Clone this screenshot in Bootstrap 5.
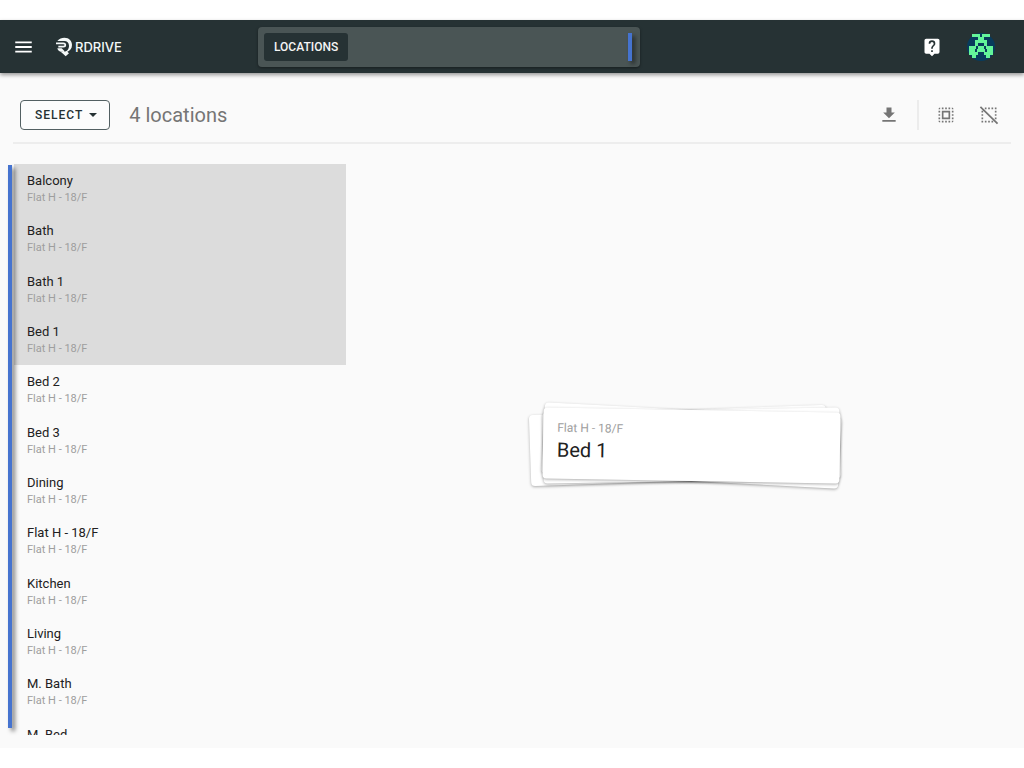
<!DOCTYPE html>
<html lang="en">
<head>
<meta charset="utf-8">
<meta name="viewport" content="width=device-width, initial-scale=1">
<title>RDrive – Locations</title>
<link href="https://cdn.jsdelivr.net/npm/bootstrap@5.3.0/dist/css/bootstrap.min.css" rel="stylesheet">
<style>
  body { font-family: Roboto, "Liberation Sans", sans-serif; color: #212121; background: #fff; padding: 20px 0; height: 100vh; overflow: hidden; }
  .app { background: #fafafa; }
  .topbar { background: #263234; height: 53px; padding: 0 28px 0 12px; box-shadow: 0 2px 4px rgba(0,0,0,.4); z-index: 2; }
  .topbar-start { flex: 0 0 25%; }
  .topbar-end { flex: 1 1 0; }
  .icon-btn { padding: 0; border: 0; line-height: 0; color: inherit; }
  .brand { font: 500 13px/20px Inter, Roboto, sans-serif; color: #f4f8f8; margin-left: 21px; gap: 1px; }
  .omnibox { flex: 0 1 382px; height: 40px; padding: 6px 8px 6px 6px; background: #4a5555; border-radius: 4px; box-shadow: 0 1px 3px rgba(0,0,0,.4); }
  .chip { background: #263234; color: #f5f5f5; font-size: 12px; font-weight: 500; line-height: 28px; padding: 0 10px; border: 0; border-radius: 3px; }
  .omnibox input { background: transparent; border: 0; outline: 0; color: #fff; min-width: 0; }
  .mark-bar { background: #4573cf; width: 4px; box-shadow: 3px 3px 4px rgba(0,0,0,.5); }
  .tools { margin: 0 13px; padding: 14px 12px 0 7px; height: 71px; border-bottom: 2px solid #ededed; color: #757575; }
  .select-btn { height: 30px; padding: 0 12px 0 14px; font-size: 12px; font-weight: 500; letter-spacing: 1px; line-height: 28px; color: #263234; border: 1px solid #536062; border-radius: 4px; background: #fcfcfc; }
  .select-btn::after { margin-left: 6px; vertical-align: 2px; border-width: 4px 4px 0; }
  .count { font-size: 20px; line-height: 28px; margin-left: 19px; color: #757575; }
  .rule { width: 2px; height: 30px; background: #ececec; margin: 0 17px 0 18px; }
  .pair { gap: 23px; }
  .browse { padding: 20px 0 13px 8px; min-height: 0; }
  .browse > .mark-bar { margin: 1px 0 7px; z-index: 1; }
  .places { width: 332px; overflow: hidden; margin-left: 2px; }
  .places ul { display: grid; grid-auto-rows: 1fr; height: 604px; }
  .places li { padding: 8px 13px 0; }
  .places li.active { background: #dcdcdc; }
  .place { font-size: 13px; line-height: 18px; }
  .where { font-size: 12px; line-height: 16px; color: #9e9e9e; }
  .places .where { font-size: 11px; }
  .viewer { padding: 0 0 9px 12px; }
  .stack { position: relative; width: 297px; height: 71px; }
  .sheet { position: absolute; inset: 0; background: #fff; border-radius: 4px; box-shadow: 0 1px 3px rgba(0,0,0,.32); }
  .sheet-a { transform: translateX(-13px) rotate(-2deg); }
  .sheet-b { transform: rotate(3deg); }
  .sheet-c { transform: rotate(-1deg); }
  .sheet-top { transform: rotate(1deg); padding: 12px 14px; }
  .sheet-top h2 { font-size: 20px; line-height: 28px; font-weight: 400; }
</style>
</head>
<body>
<div class="app d-flex flex-column h-100">
  <header class="topbar d-flex align-items-center flex-shrink-0 position-relative">
    <div class="topbar-start d-flex align-items-center text-white">
      <button class="icon-btn btn" type="button" aria-label="Menu">
        <svg width="23" height="22" viewBox="0 0 24 24" fill="currentColor"><path d="M3 18h18v-2H3zm0-5h18v-2H3zm0-7v2h18V6z"/></svg>
      </button>
      <a class="brand d-flex align-items-center text-decoration-none" href="#">
        <svg width="18" height="20" viewBox="0 0 54 60"><path fill="#f4f8f8" d="M4 12C10 5 17 2 25 2c15 0 23 10 23 22 0 11-6 17-14 20l5 5-10 9-8-8-7-6h8c12 0 17-8 17-18 0-9-6-14-14-14z"/><path fill="none" stroke="#f4f8f8" stroke-width="5" d="M0 19h22c8 0 8 10 0 10H7"/><path fill="#f4f8f8" d="M4 34h13l9 9-3 4-3-3H14c-5 0-9-5-10-10z"/></svg>
        RDRIVE
      </a>
    </div>
    <div class="omnibox d-flex">
      <button class="chip" type="button">LOCATIONS</button>
      <input class="flex-grow-1" type="text" aria-label="Search">
      <span class="mark-bar"></span>
    </div>
    <div class="topbar-end d-flex align-items-center justify-content-end text-white">
      <button class="icon-btn btn me-4" type="button" aria-label="Help">
        <svg width="20" height="20" viewBox="0 0 24 24"><path fill="#fff" d="M19 2H5a2 2 0 0 0-2 2v14c0 1.100.9 2 2 2h4l3 3 3-3h4a2 2 0 0 0 2-2V4a2 2 0 0 0-2-2z"/><path fill="#263234" d="M13 18h-2v-2h2zm2.070-7.750-.9.920C13.450 11.900 13 12.500 13 14h-2v-.5c0-1.100.45-2.100 1.170-2.830l1.240-1.260c.37-.36.59-.86.59-1.410a2 2 0 0 0-4 0H8a4 4 0 1 1 8 0c0 .88-.36 1.680-.93 2.250z"/></svg>
      </button>
      <button class="icon-btn btn" type="button" aria-label="Account">
        <svg width="30" height="30" viewBox="0 0 30 30"><circle cx="15" cy="15" r="14" fill="#083b5c"/><path fill="#63f49a" d="M6 2h8v3H6zM16 2h8v3h-8zM12 5h6v3h-6zM9 8h12v3H9zM9 11h3v3H9zM18 11h3v3h-3zM3 14h6v3H3zM9 14h1v3H9zM12 14h6v3h-6zM20 14h7v3h-7zM3 17h6v3H3zM11 17h8v3h-8zM21 17h6v3h-6zM3 20h9v3H3zM18 20h9v3h-9zM6 23h4v3H6zM20 23h4v3h-4z"/></svg>
      </button>
    </div>
  </header>

  <div class="tools d-flex align-items-center flex-shrink-0">
    <button class="select-btn dropdown-toggle" type="button">SELECT</button>
    <span class="count me-auto">4 locations</span>
    <button class="icon-btn btn" type="button" aria-label="Download">
      <svg width="20" height="20" viewBox="0 0 24 24" fill="currentColor"><path d="M19 9h-4V3H9v6H5l7 7zM4 18v2h16v-2z"/></svg>
    </button>
    <span class="rule"></span>
    <div class="pair d-flex">
      <button class="icon-btn btn" type="button" aria-label="Select all">
        <svg width="20" height="20" viewBox="0 0 24 24" fill="currentColor"><path d="M3 5h2V3a2 2 0 0 0-2 2zm0 8h2v-2H3zm4 8h2v-2H7zM3 9h2V7H3zm10-6h-2v2h2zm6 0v2h2a2 2 0 0 0-2-2zM5 21v-2H3c0 1.100.9 2 2 2zm-2-4h2v-2H3zM9 3H7v2h2zm2 18h2v-2h-2zm8-8h2v-2h-2zm0 8a2 2 0 0 0 2-2h-2zm0-12h2V7h-2zm0 8h2v-2h-2zm-4 4h2v-2h-2zm0-16h2V3h-2zM7 17h10V7H7zm2-8h6v6H9z"/></svg>
      </button>
      <button class="icon-btn btn" type="button" aria-label="Clear selection">
        <svg width="20" height="20" viewBox="0 0 24 24" fill="currentColor"><path d="M7 3h2v2H7zM11 3h2v2h-2zM15 3h2v2h-2zM19 3h2v2h-2zM19 7h2v2h-2zM19 11h2v2h-2zM19 15h2v2h-2zM3 7h2v2H3zM3 11h2v2H3zM3 15h2v2H3zM3 19h2v2H3zM7 19h2v2H7zM11 19h2v2h-2zM15 19h2v2h-2zM2.400 1.500 1 3l20.500 20 1.500-1.500z"/></svg>
      </button>
    </div>
  </div>

  <main class="browse d-flex flex-grow-1">
    <span class="mark-bar flex-shrink-0"></span>
    <nav class="places flex-shrink-0" aria-label="Locations">
      <ul class="list-unstyled mb-0">
        <li class="active"><div class="place">Balcony</div><div class="where">Flat H - 18/F</div></li>
        <li class="active"><div class="place">Bath</div><div class="where">Flat H - 18/F</div></li>
        <li class="active"><div class="place">Bath 1</div><div class="where">Flat H - 18/F</div></li>
        <li class="active"><div class="place">Bed 1</div><div class="where">Flat H - 18/F</div></li>
        <li><div class="place">Bed 2</div><div class="where">Flat H - 18/F</div></li>
        <li><div class="place">Bed 3</div><div class="where">Flat H - 18/F</div></li>
        <li><div class="place">Dining</div><div class="where">Flat H - 18/F</div></li>
        <li><div class="place">Flat H - 18/F</div><div class="where">Flat H - 18/F</div></li>
        <li><div class="place">Kitchen</div><div class="where">Flat H - 18/F</div></li>
        <li><div class="place">Living</div><div class="where">Flat H - 18/F</div></li>
        <li><div class="place">M. Bath</div><div class="where">Flat H - 18/F</div></li>
        <li><div class="place">M. Bed</div></li>
      </ul>
    </nav>
    <section class="viewer flex-grow-1 d-flex align-items-center justify-content-center">
      <div class="stack">
        <div class="sheet sheet-a"></div>
        <div class="sheet sheet-b"></div>
        <div class="sheet sheet-c"></div>
        <article class="sheet sheet-top"><div class="where">Flat H - 18/F</div><h2 class="mb-0">Bed 1</h2></article>
      </div>
    </section>
  </main>
</div>
<script src="https://cdn.jsdelivr.net/npm/bootstrap@5.3.0/dist/js/bootstrap.bundle.min.js"></script>
</body>
</html>
